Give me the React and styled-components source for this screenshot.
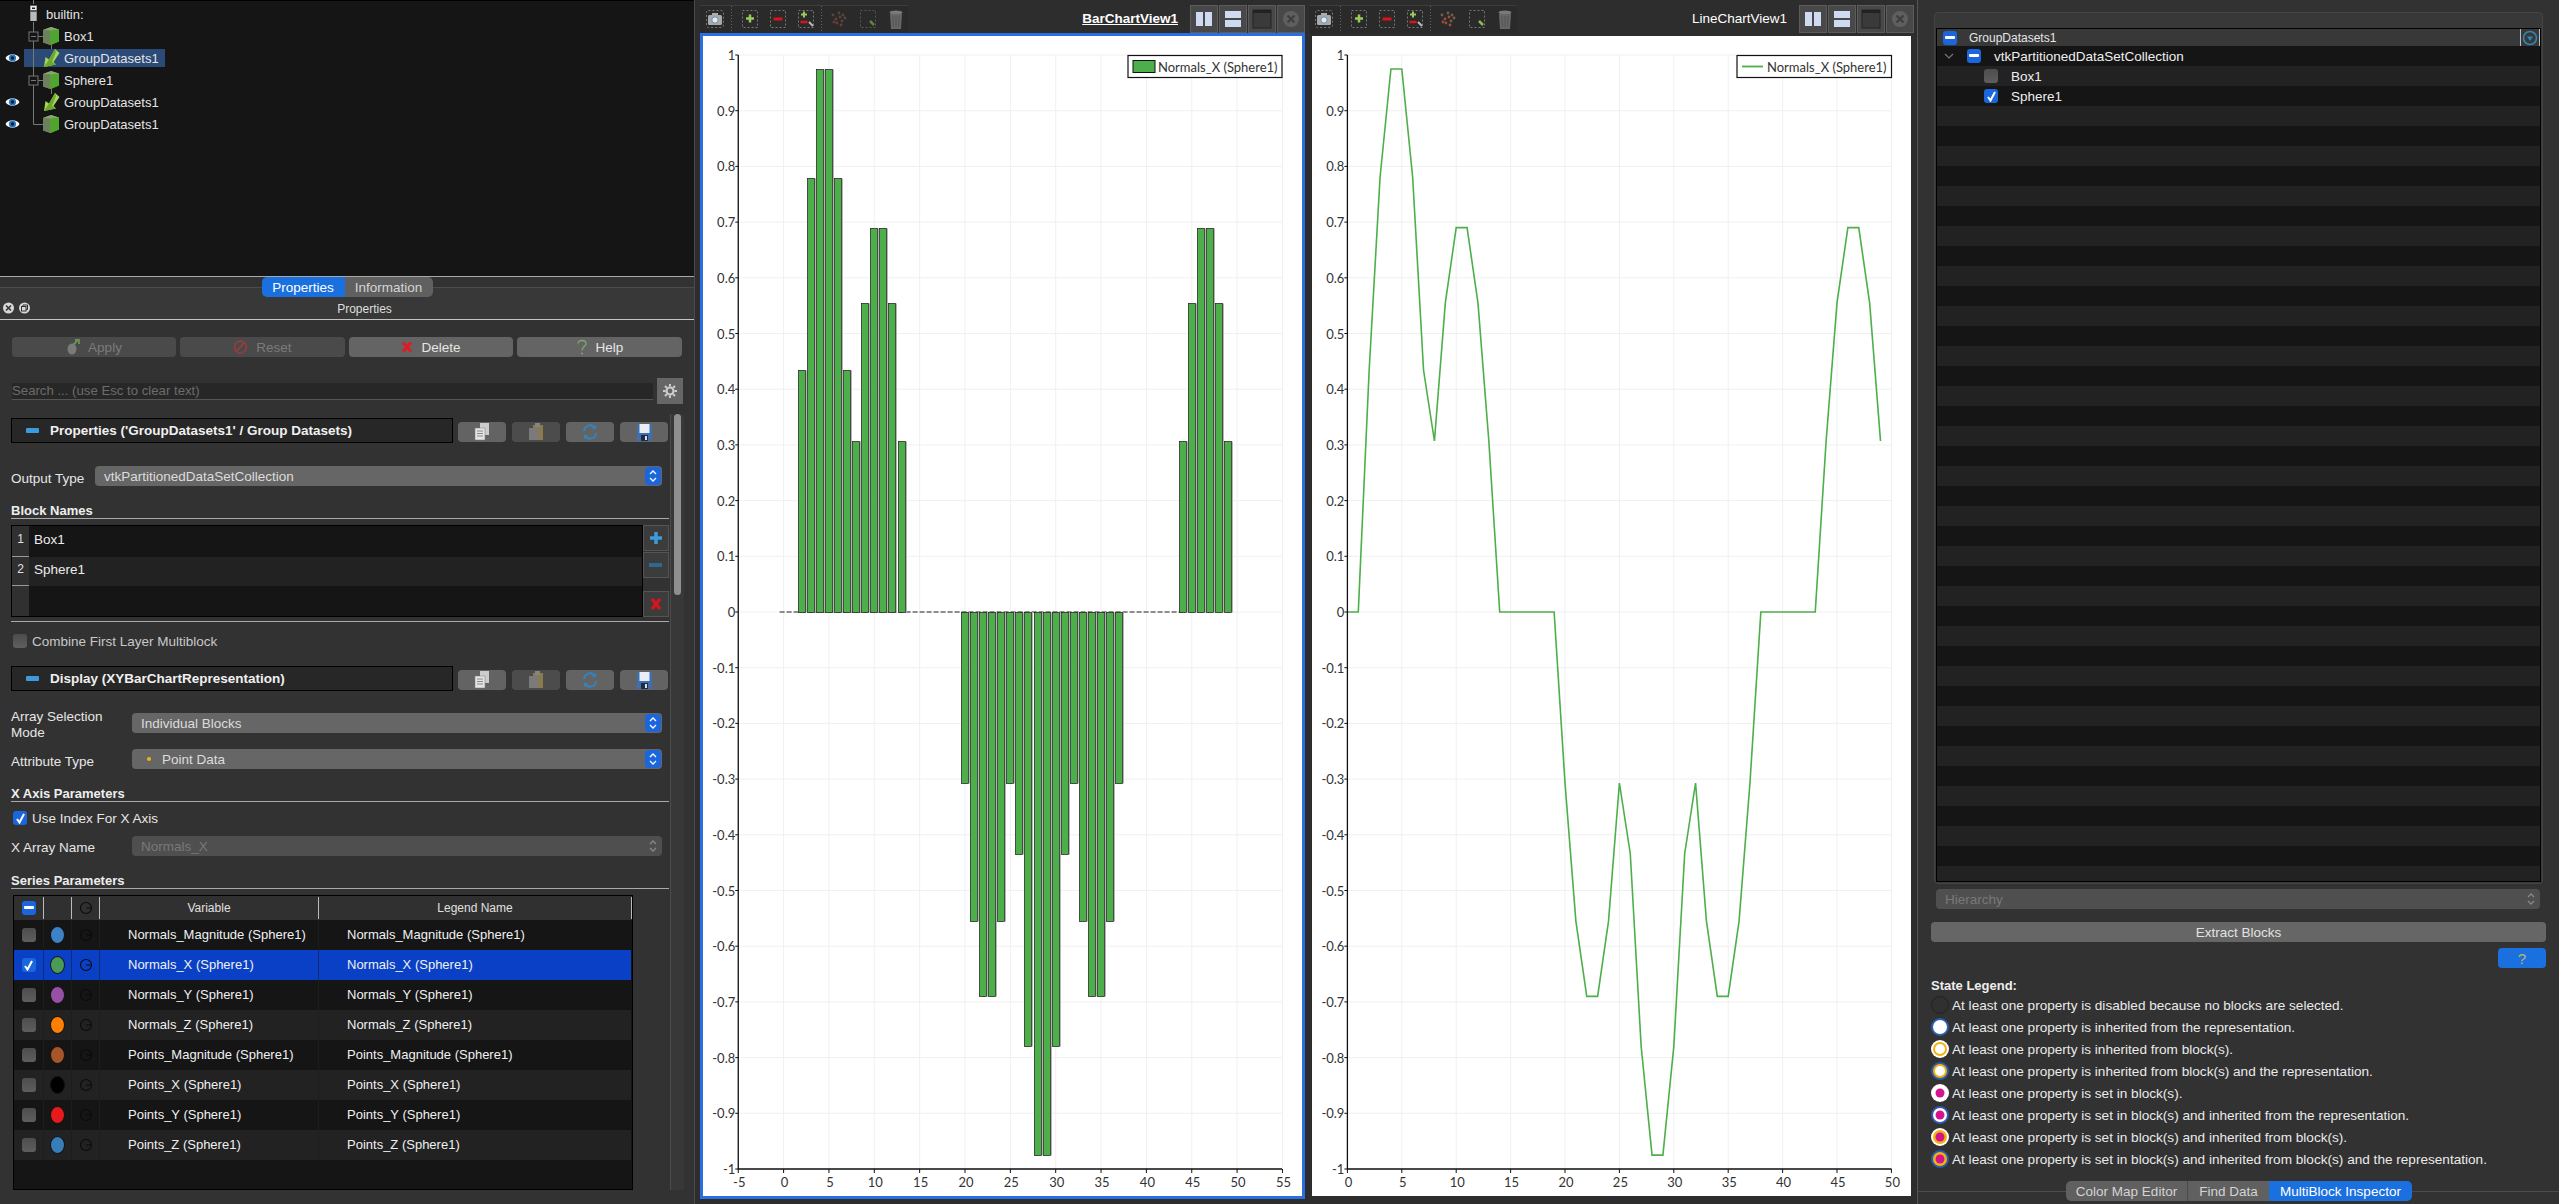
import React from 'react';
import styled, { createGlobalStyle } from 'styled-components';

const Global = createGlobalStyle`
  html, body { margin: 0; padding: 0; background: #2d2d2d; }
  body { font-family: "Liberation Sans", Arial, sans-serif; font-size: 13px; color: #e8e8e8; overflow: hidden; }
  * { box-sizing: border-box; }
`;

const Page = styled.div`width: 2559px; height: 1204px; display: flex; background: #2d2d2d; overflow: hidden;`;
const LeftColumn = styled.div`width: 695px; height: 1204px; flex: none; display: flex; flex-direction: column; margin-right: 5px; border-right: 1px solid #4a4a4a; background: #323232;`;

/* pipeline tree */
const PipelineTree = styled.div`height: 277px; flex: none; background: #151515; padding-top: 2px; border-top: 1px solid #000; border-bottom: 1px solid #a8a8a8;`;
const TreeRow = styled.div`height: 22px; display: flex; align-items: center;`;
const EyeCell = styled.div`width: 24px; flex: none; display: flex; justify-content: center; padding-left: 1px;`;
const TreeBody = styled.div`height: 18px; width: 141px; display: flex; align-items: center; background: ${p => (p.$selected ? '#2c4a78' : 'transparent')};`;
const TreeLabel = styled.span`font-size: 13px; color: #e4e4e4; white-space: nowrap;`;
const TreeSvg = styled.svg`flex: none; overflow: visible; display: block;`;

/* dock tabs */
const DockTabs = styled.div`height: 20px; flex: none; display: flex; justify-content: center; position: relative; background: linear-gradient(#323232 50%, #383838 50%);`;
const DockTabLine = styled.div`position: absolute; left: 0; right: 0; top: 10px; height: 1px; background: #4c4c4c;`;
const TabGroup = styled.div`display: flex; position: relative; border-radius: 5px; overflow: hidden; height: 20px;`;
const Tab = styled.div`height: 20px; width: ${p => p.$w}px; display: flex; align-items: center; justify-content: center; font-size: 13.5px; white-space: nowrap; color: ${p => (p.$active ? '#fff' : '#d4d4d4')}; background: ${p => (p.$active ? '#1b70e0' : '#606060')}; border-left: ${p => (p.$sep ? '1px solid #4a4a4a' : '0')};`;
const TitleBar = styled.div`height: 23px; flex: none; display: flex; align-items: center; padding-left: 3px; gap: 4px; background: #383838; border-bottom: 1px solid #c4c4c4; position: relative;`;
const TitleText = styled.div`position: absolute; left: 0; right: 0; text-align: center; font-size: 12px; color: #dedede; padding-left: 35px; padding-top: 1px;`;

const ActionRow = styled.div`margin: 17px 12px 0; width: 671px; display: grid; grid-template-columns: 164px 165px 164px 165px; column-gap: 4px;`;
const ActionButton = styled.div`height: 20px; border-radius: 4px; display: flex; align-items: center; justify-content: center; gap: 8px; font-size: 13.5px; background: ${p => (p.$disabled ? '#4a4a4a' : '#646464')}; color: ${p => (p.$disabled ? '#7b7b7b' : '#e6e6e6')};`;
const SearchRow = styled.div`margin: 21px 11px 0 12px; display: flex; align-items: center; gap: 4px; height: 26px;`;
const SearchInput = styled.div`width: 642px; height: 17px; background: #272727; border-bottom: 1px solid #555; color: #6c6c6c; font-size: 13.2px; line-height: 16px; white-space: nowrap;`;
const GearButton = styled.div`width: 26px; height: 26px; background: #666; display: flex; align-items: center; justify-content: center;`;

const ScrollArea = styled.div`margin-top: 10px; height: 776px; display: flex; flex: none;`;
const ScrollContent = styled.div`width: 670px; padding-left: 11px; flex: none; display: flex; flex-direction: column;`;
const ScrollTrack = styled.div`width: 14px; height: 776px; background: #383838; border-left: 1px solid #4c4c4c; padding: 0 3px;`;
const ScrollThumb = styled.div`width: 7px; height: 181px; background: #8f8f8f; border-radius: 4px;`;

const SectionHeader = styled.div`margin-top: ${p => p.$top}px; height: 25px; flex: none; display: flex; align-items: flex-end; gap: 6px; width: 658px;`;
const SectionBox = styled.div`width: 442px; height: 25px; background: #272727; border: 1px solid #000; display: flex; align-items: center; padding-left: 14px; font-weight: 700; font-size: 13.5px; color: #f0f0f0; gap: 11px; margin-right: -1px;`;
const MinusBar = styled.span`width: 13px; height: 5px; background: #3b9bdc; display: block; flex: none; border-radius: 1px;`;
const MiniButton = styled.div`width: 48px; height: 20px; margin-bottom: 1px; border-radius: 4px; background: ${p => (p.$dim ? '#4c4c4c' : '#636363')}; display: flex; align-items: center; justify-content: center;`;

const FormRow = styled.div`margin-top: ${p => p.$top || 0}px; height: ${p => p.$h || 20}px; flex: none; display: flex; align-items: flex-start;`;
const FieldLabel = styled.div`width: ${p => p.$w}px; flex: none; font-size: 13.5px; line-height: 16px; color: #e6e6e6; margin-top: ${p => p.$mt ?? 5}px;`;
const Combo = styled.div`width: ${p => p.$w}px; height: 20px; border-radius: 4px; background: ${p => (p.$disabled ? '#4f4f4f' : '#666')}; color: ${p => (p.$disabled ? '#787878' : '#dcdcdc')}; display: flex; align-items: center; justify-content: space-between; padding: 0 1px 0 9px; font-size: 13.5px;`;
const ComboText = styled.span`display: flex; align-items: center; gap: 11px; padding-left: ${p => p.$indent || 0}px;`;
const ComboArrow = styled.span`width: 16px; height: 18px; border-radius: 4px; display: flex; align-items: center; justify-content: center; background: ${p => (p.$disabled ? 'transparent' : '#1b66dd')}; flex: none;`;
const GroupTitle = styled.div`margin-top: ${p => p.$top}px; width: 658px; height: 15px; flex: none; border-bottom: 1px solid #a9a9a9; font-weight: 700; font-size: 13px; line-height: 13px; color: #eee;`;

const BlockWrap = styled.div`margin-top: 6px; height: 92px; display: flex; flex: none; width: 658px;`;
const BlockTable = styled.div`width: 632px; height: 92px; background: #151515; border: 1px solid #000; display: flex; flex-direction: column; position: relative;`;
const BlockRow = styled.div`height: ${p => p.$h}px; flex: none; display: flex; background: ${p => (p.$alt ? '#222' : 'transparent')};`;
const BlockIndex = styled.div`width: 17px; flex: none; background: #303030; border-bottom: ${p => (p.$line ? '1px solid #999' : '0')}; font-size: 12px; display: flex; align-items: center; justify-content: center; padding-bottom: 4px; color: #e0e0e0;`;
const BlockFill = styled.div`width: 17px; position: absolute; left: 0; top: 60px; bottom: 0; background: #303030;`;
const BlockName = styled.div`display: flex; align-items: center; padding-left: 5px; padding-bottom: 4px; font-size: 13.5px; color: #ececec;`;
const BlockTools = styled.div`width: 26px; flex: none; display: flex; flex-direction: column; gap: 1px;`;
const ToolButton = styled.div`width: 26px; height: 26px; flex: none; background: #3c3c3c; border: 1px solid #555; display: flex; align-items: center; justify-content: center; margin-top: ${p => p.$top || 0}px;`;
const Divider = styled.div`margin-top: 4px; height: 1px; width: 658px; flex: none; background: #a9a9a9;`;

const CheckRow = styled.div`margin-top: ${p => p.$top}px; height: 14px; flex: none; display: flex; align-items: center; gap: 5px; margin-left: 2px; font-size: 13.5px; color: ${p => (p.$dim ? '#c8c8c8' : '#e6e6e6')};`;
const Check = styled.span`width: 14px; height: 14px; border-radius: 3px; flex: none; display: flex; align-items: center; justify-content: center; margin-left: ${p => p.$ml || 0}px; background: ${p => (p.$state === 'off' ? 'linear-gradient(#4d4d4d,#5e5e5e)' : '#1b66dd')};`;

const SeriesTable = styled.div`margin: 6px 0 0 2px; width: 620px; height: 295px; background: #151515; border: 1px solid #000; display: flex; flex-direction: column; flex: none;`;
const SeriesHead = styled.div`height: 24px; flex: none; display: grid; grid-template-columns: 30px 28px 28px 219px 1fr; background: #303030; font-size: 12px; color: #e0e0e0; width: 618px;`;
const HeadCell = styled.div`display: flex; align-items: center; justify-content: center; border-right: 1px solid #bbb; height: 22px; margin-top: 1px;`;
const SeriesRow = styled.div`height: 30px; flex: none; width: 617px; display: grid; grid-template-columns: 30px 28px 28px 219px 1fr; background: ${p => (p.$selected ? '#0a40c6' : p.$alt ? '#222' : '#151515')}; color: #f0f0f0; font-size: 13px;`;
const Cell = styled.div`display: flex; align-items: center; justify-content: ${p => (p.$text ? 'flex-start' : 'center')}; padding-left: ${p => (p.$text ? 28 : 0)}px; padding-bottom: ${p => (p.$text ? 2 : 0)}px; border-right: 1px solid ${p => (p.$last ? 'transparent' : p.$selected ? '#0e2b73' : '#1d1d1d')};`;
const Swatch = styled.span`width: 15px; height: 18px; border-radius: 50%; background: ${p => p.$c}; display: block; border: 1px solid #111;`;

/* views */
const ViewPane = styled.div`width: 605px; height: 1199px; flex: none; display: flex; flex-direction: column; padding-top: 4px; margin-right: ${p => p.$mr}px;`;
const ViewBar = styled.div`height: 29px; flex: none; display: flex; align-items: center; justify-content: space-between;`;
const ToolStrip = styled.div`width: 208px; height: 28px; background: #2a2a2a; border-top: 1px solid #3c3c3c; display: flex; align-items: center; flex: none;`;
const StripIcon = styled.svg`display: block; flex: none; margin-left: ${p => p.$ml || 0}px;`;
const ViewRight = styled.div`display: flex; align-items: center; gap: 1px;`;
const ViewTitle = styled.div`font-size: 13.5px; color: #fff; margin-right: 11px; font-weight: ${p => (p.$active ? 700 : 400)}; text-decoration: ${p => (p.$active ? 'underline' : 'none')};`;
const ViewButton = styled.div`width: 28px; height: 28px; background: #484848; border: 1px solid #5c5c5c; display: flex; align-items: center; justify-content: center;`;
const ChartFrame = styled.div`flex: none; width: 605px; height: 1166px; border: 3px solid ${p => (p.$active ? '#2a6fe0' : '#2d2d2d')}; background: #fff;`;
const ChartSvg = styled.svg`display: block; font-family: Lato, "Open Sans", sans-serif; font-size: 13px;`;

/* right panel */
const RightPanel = styled.div`margin-left: 3px; width: 642px; height: 1204px; flex: none; border-left: 1px solid #555; background: #323232; padding: 12px 13px 0 14px; display: flex; flex-direction: column;`;
const GroupFrame = styled.div`margin: 0 3px 0 2px; height: 872px; flex: none; border: 1px solid #444; border-radius: 4px; background: #383838; padding: 15px 1px 0 1px;`;
const InspectorTable = styled.div`height: 854px; border: 1px solid #000; background: #151515; overflow: hidden; display: flex; flex-direction: column;`;
const InspectorHead = styled.div`height: 17px; flex: none; display: flex; align-items: center; gap: 12px; background: #383838; font-size: 12px; color: #e6e6e6; padding-left: 6px; position: relative;`;
const InspectorRow = styled.div`height: 20px; flex: none; display: flex; align-items: center; background: ${p => (p.$alt ? '#222' : '#151515')}; padding-left: ${p => p.$indent || 0}px; gap: 13px; font-size: 13.5px; color: #eee;`;
const Chevron = styled.svg`margin-left: 7px; margin-right: -6px; display: block;`;
const FilterMark = styled.div`position: absolute; right: 0; top: 0; height: 17px; width: 20px; border-left: 1px solid #bbb; border-right: 1px solid #bbb; display: flex; align-items: center; justify-content: center;`;
const WideCombo = styled(Combo)`margin: 5px 6px 0 4px; width: auto; flex: none; padding-left: 9px;`;
const ExtractButton = styled.div`margin: 13px 0 0 -1px; height: 20px; flex: none; border-radius: 4px; background: #666; display: flex; align-items: center; justify-content: center; font-size: 13.5px; color: #e2e2e2;`;
const HelpButton = styled.div`margin-top: 6px; align-self: flex-end; width: 48px; height: 20px; flex: none; border-radius: 4px; background: #1b70e0; color: #b9b56c; display: flex; align-items: center; justify-content: center; font-size: 15px;`;
const LegendTitle = styled.div`margin: 10px 0 0 -1px; height: 16px; line-height: 16px; font-weight: 700; font-size: 13px; color: #eee; flex: none;`;
const LegendRow = styled.div`margin-left: -1px; height: 22px; flex: none; display: flex; align-items: center; gap: 3px; font-size: 13.6px; color: #eaeaea; white-space: nowrap;`;
const DotSvg = styled.svg`flex: none; display: block;`;
const BottomTabs = styled.div`margin: 11px -13px 0 -14px; height: 20px; flex: none; display: flex; justify-content: flex-start; padding-left: 148px; position: relative;`;

/* ---------- icons ---------- */
const Eye = () => (
  <svg width="15" height="14" viewBox="0 0 15 14">
    <path d="M.5 7C3 2 12 2 14.5 7 12 12 3 12 .5 7Z" fill="#f4f8fb" />
    <circle cx="7.5" cy="7" r="3.6" fill="#2a79c0" />
    <circle cx="7.5" cy="7" r="1.7" fill="#0b1d33" />
  </svg>
);
const Cube = () => (
  <g>
    <path d="M0 3 8 0l8 2.500v12L8 18 0 15.500Z" fill="#6f8f4a" />
    <path d="M7 3.500l9-1v12L7 18Z" fill="#4fa52d" />
    <path d="M0 3l7 .5 9-1L8 0Z" fill="#86a870" />
    <path d="M0 3l7 .5V18L0 15.500Z" fill="#6e7f5e" />
  </g>
);
const Arrow = () => (
  <g>
    <path d="M0 18L1.500 8 5 10.500 11 0 15.500 4 9.500 13 12 15.500Z" fill="#a4d45c" />
    <path d="M0 18L5 10.500 11 0 12 3 8 13 12 15.500Z" fill="#6ba82c" />
  </g>
);
const TreeGlyph = ({ kind, line, box, elbow, stub }) => {
  if (kind === 'server') {
    return (
      <TreeSvg width="22" height="18" viewBox="0 0 22 18">
        <path d="M9.500 -8V-1M9.500 17v5" stroke="#7b7b7b" />
        <rect x="6" y="0" width="7" height="16" fill="#5b5b5b" />
        <rect x="6.500" y="1" width="6" height="4" fill="#f0f0f0" />
        <rect x="8" y="2.500" width="3" height="1.500" fill="#222" />
        <rect x="6.500" y="7" width="6" height="9" fill="#bbb" />
      </TreeSvg>
    );
  }
  return (
    <TreeSvg width="40" height="18" viewBox="0 0 40 18">
      {line && <path d="M9.500 -2V20" stroke="#777" />}
      {elbow && <path d="M9.500 -2V9.500H19" stroke="#777" fill="none" />}
      {box && (
        <g>
          <path d="M9.500 -2V20" stroke="#777" />
          <rect x="5" y="5" width="9" height="9" fill="#151515" stroke="#777" />
          <path d="M7 9.500h5M14 9.500h5" stroke="#777" />
        </g>
      )}
      {stub && <path d="M27.500 18v5" stroke="#777" />}
      <g transform="translate(19 0)">{kind === 'cube' ? <Cube /> : <g transform="translate(1 0)"><Arrow /></g>}</g>
    </TreeSvg>
  );
};
const Chev = ({ color = '#fff' }) => (
  <svg width="10" height="14" viewBox="0 0 10 14">
    <path d="M2 5l3-3 3 3M2 9l3 3 3-3" fill="none" stroke={color} strokeWidth="1.300" />
  </svg>
);
const TickMark = () => (
  <svg width="11" height="11" viewBox="0 0 11 11"><path d="M2 6l2.500 3.500L9 1" fill="none" stroke="#fff" strokeWidth="2" /></svg>
);
const DashMark = () => <svg width="10" height="4" viewBox="0 0 10 4"><rect width="10" height="3" rx="1" fill="#fff" /></svg>;
const CopyIcon = () => (
  <svg width="16" height="18" viewBox="0 0 16 18">
    <rect x="6" y="0" width="9" height="12" fill="#ccc" />
    <rect x="1" y="5" width="10" height="12" fill="#e4e4e4" stroke="#777" strokeWidth=".5" />
    <path d="M3 8h6M3 10.500h6M3 13h6" stroke="#888" />
  </svg>
);
const PasteIcon = () => (
  <svg width="16" height="18" viewBox="0 0 16 18" opacity=".75">
    <rect x="5" y="2" width="10" height="15" fill="#a08a50" />
    <rect x="1" y="5" width="9" height="12" fill="#8a8a8a" />
    <rect x="7" y="0" width="5" height="4" fill="#999" />
  </svg>
);
const RefreshIcon = () => (
  <svg width="16" height="18" viewBox="0 0 16 18">
    <path d="M2 8A6 6 0 0 1 13 5M14 10A6 6 0 0 1 3 13" fill="none" stroke="#2f86c6" strokeWidth="1.800" />
    <path d="M14 2v4h-4M2 16v-4h4" fill="#2f86c6" />
  </svg>
);
const SaveIcon = () => (
  <svg width="15" height="17" viewBox="0 0 15 17">
    <rect width="15" height="17" rx="1" fill="#3f6fb0" />
    <rect x="2.500" y="0" width="10" height="9" fill="#e8eef6" />
    <rect x="4" y="11" width="7" height="6" fill="#1e2c44" />
    <rect x="8" y="12" width="2" height="4" fill="#ddd" />
  </svg>
);
const PanelTools = () => (
  <>
    <MiniButton><CopyIcon /></MiniButton>
    <MiniButton $dim><PasteIcon /></MiniButton>
    <MiniButton><RefreshIcon /></MiniButton>
    <MiniButton><SaveIcon /></MiniButton>
  </>
);
const SwirlIcon = ({ color = '#0b0b0b' }) => (
  <svg width="14" height="14" viewBox="0 0 14 14"><circle cx="7" cy="7" r="5.500" fill="none" stroke={color} strokeWidth="1.100" /><path d="M7 7h5" stroke={color} /></svg>
);

const dashed = { fill: 'none', stroke: '#777', strokeDasharray: '2 2' };
const CameraIcon = () => (
  <StripIcon $ml={6} width="18" height="18" viewBox="0 0 18 18">
    <rect x=".5" y=".5" width="17" height="17" rx="2" {...dashed} />
    <rect x="2" y="5" width="14" height="10" rx="1.500" fill="#aaa" />
    <rect x="6" y="3" width="6" height="3" fill="#aaa" />
    <circle cx="9" cy="10" r="3.200" fill="#dfe9f2" stroke="#6c8aa5" />
  </StripIcon>
);
const Sep = () => (
  <StripIcon $ml={7} width="1" height="26" viewBox="0 0 1 26"><path d="M.5 0V26" stroke="#666" strokeDasharray="1 2" /></StripIcon>
);
const ZoomIcon = ({ kind, ml }) => (
  <StripIcon $ml={ml} width="16" height="18" viewBox="0 0 16 18">
    <rect x=".5" y=".5" width="15" height="17" {...dashed} />
    {kind === 'plus' && <path d="M8 4.500v8M4 8.500h8" stroke="#9acb5a" strokeWidth="2.500" />}
    {kind === 'minus' && <path d="M3.500 9h9" stroke="#d9141d" strokeWidth="3" />}
    {kind === 'mix' && <g><path d="M6 1.500v6M3 4.500h6" stroke="#9acb5a" strokeWidth="2" /><path d="M2.500 12h7" stroke="#d9141d" strokeWidth="2.500" /><path d="M11 12l4 4" stroke="#bbb" strokeWidth="2" /></g>}
  </StripIcon>
);
const PickIcon = ({ ml, on }) => (
  <StripIcon $ml={ml} width="18" height="18" viewBox="0 0 18 18" opacity={on ? 0.8 : 0.45}>
    {[[3, 5], [6, 9], [9, 3], [10, 7], [13, 5], [7, 13], [12, 11], [4, 12], [15, 8], [11, 15]].map(([x, y], i) => <circle key={i} cx={x} cy={y} r="1.400" fill={i % 2 ? '#c0583a' : '#8a6a55'} />)}
  </StripIcon>
);
const PickZoneIcon = ({ ml, on }) => (
  <StripIcon $ml={ml} width="16" height="18" viewBox="0 0 16 18" opacity={on ? 1 : 0.6}>
    <rect x=".5" y=".5" width="15" height="17" {...dashed} />
    <path d="M10 11l4 4" stroke="#8bbb4a" strokeWidth="2.500" />
  </StripIcon>
);
const TrashIcon = ({ ml }) => (
  <StripIcon $ml={ml} width="14" height="19" viewBox="0 0 14 19">
    <ellipse cx="7" cy="2.500" rx="6.500" ry="2" fill="#7a7a7a" />
    <path d="M1 4h12l-1 15H2Z" fill="#666" />
    <path d="M4 6l.5 11M7 6v11M10 6l-.5 11" stroke="#555" />
  </StripIcon>
);
const SplitIcon = ({ dir }) => (
  <svg width="18" height="18" viewBox="0 0 18 18">
    {dir === 'h'
      ? <g fill="#cfd9f2"><rect x="1" y="2" width="7" height="14" /><rect x="10" y="2" width="7" height="14" /></g>
      : <g fill="#cfd9f2"><rect x="1" y="1" width="16" height="7" /><rect x="1" y="10" width="16" height="7" /></g>}
  </svg>
);
const MaxIcon = () => <svg width="20" height="20" viewBox="0 0 20 20"><rect x="1" y="1" width="18" height="18" fill="#3a3a3a" stroke="#222" strokeWidth="1" /><rect x="1" y="1" width="18" height="3" fill="#222" /></svg>;
const CloseIcon = () => <svg width="18" height="18" viewBox="0 0 18 18"><circle cx="9" cy="9" r="8" fill="#5f5f5f" /><path d="M5.500 5.500l7 7M12.500 5.500l-7 7" stroke="#3e3e3e" strokeWidth="2.200" /></svg>;

const ViewToolbar = ({ active }) => (
  <ToolStrip>
    <CameraIcon />
    <Sep />
    <ZoomIcon kind="plus" ml={10} />
    <ZoomIcon kind="minus" ml={12} />
    <ZoomIcon kind="mix" ml={12} />
    <Sep />
    <PickIcon ml={8} on={!active} />
    <PickZoneIcon ml={12} on={!active} />
    <TrashIcon ml={13} />
  </ToolStrip>
);

/* ---------- chart ---------- */
const VALUES = [0, 0, .434, .78, .975, .975, .78, .434, .307, .555, .69, .69, .555, .307, 0, 0, 0, 0, 0, 0,
  -.307, -.555, -.69, -.69, -.555, -.307, -.434, -.78, -.975, -.975, -.78, -.434, -.307, -.555, -.69, -.69, -.555, -.307,
  0, 0, 0, 0, 0, 0, .307, .555, .69, .69, .555, .307];
const YTICKS = Array.from({ length: 21 }, (_, i) => Math.round((1 - i * 0.1) * 10) / 10);
const GREEN = '#4daf4a';

const Bar = ({ cx, top, bottom }) => {
  const x = Math.round(cx - 4) + 0.5;
  const y = Math.round(Math.min(top, bottom)) + 0.5;
  const h = Math.round(Math.abs(top - bottom));
  return (
    <g>
      <rect x={x + 7.5} y={y} width="1" height={h} fill="#b5b5b5" />
      <rect x={x} y={y} width="7" height={h} fill={GREEN} stroke="#222" strokeWidth=".75" />
    </g>
  );
};

const Chart = ({ type, ox, x0, unit, xTicks, right, legendX }) => {
  const X = v => x0 - ox + unit * v;
  const Y = v => 612 - 36 - 557 * v;
  const left = X(xTicks[0]);
  const rightX = right - ox;
  const lx = legendX - ox;
  const lw = right - legendX;
  return (
    <ChartSvg width="599" height="1160" viewBox="0 0 599 1160">
      {xTicks.map(t => <path key={t} d={`M${X(t)} ${Y(1)}V${Y(-1)}`} stroke="#f0f0f0" />)}
      {YTICKS.map(t => <path key={t} d={`M${left} ${Y(t)}H${rightX}`} stroke="#f0f0f0" />)}
      {type === 'bar' && <path d={`M${X(0) - 4} ${Y(0)}H${X(44)}`} stroke="#222" strokeDasharray="5 2" />}
      {type === 'bar' && VALUES.map((v, i) => (v === 0 ? null : <Bar key={i} cx={X(i)} top={Y(v)} bottom={Y(0)} />))}
      {type === 'line' && (
        <polyline points={VALUES.map((v, i) => `${X(i)},${Y(v)}`).join(' ')} fill="none" stroke={GREEN} strokeWidth="1.600" />
      )}
      <path d={`M${left} ${Y(1)}V${Y(-1)}H${rightX}`} fill="none" stroke="#111" strokeWidth="1.300" />
      {YTICKS.map(t => (
        <g key={t}>
          <path d={`M${left - 3} ${Y(t)}H${left}`} stroke="#111" />
          <text x={left - 3} y={Y(t)} textAnchor="end" dominantBaseline="central" fill="#333">{t === 0 ? '0' : t}</text>
        </g>
      ))}
      {xTicks.map(t => (
        <g key={t}>
          <path d={`M${X(t)} ${Y(-1)}v4`} stroke="#111" />
          <text x={X(t) + 1} y={Y(-1) + 13} textAnchor="middle" dominantBaseline="central" fill="#333">{t}</text>
        </g>
      ))}
      <rect x={lx} y="19.500" width={lw} height="22" fill="#fff" stroke="#111" strokeWidth="1.200" />
      {type === 'bar'
        ? <rect x={lx + 5} y="24.500" width="22" height="12" fill={GREEN} stroke="#111" />
        : <path d={`M${lx + 5} 30.500h21`} stroke={GREEN} strokeWidth="1.800" />}
      <text x={lx + 30} y="30.500" dominantBaseline="central" fill="#333">Normals_X (Sphere1)</text>
    </ChartSvg>
  );
};

const BAR_TICKS = Array.from({ length: 13 }, (_, i) => -5 + i * 5);
const LINE_TICKS = Array.from({ length: 11 }, (_, i) => i * 5);

const View = ({ title, active, mr, chart }) => (
  <ViewPane $mr={mr}>
    <ViewBar>
      <ViewToolbar active={active} />
      <ViewRight>
        <ViewTitle $active={active}>{title}</ViewTitle>
        <ViewButton><SplitIcon dir="h" /></ViewButton>
        <ViewButton><SplitIcon dir="v" /></ViewButton>
        <ViewButton><MaxIcon /></ViewButton>
        <ViewButton><CloseIcon /></ViewButton>
      </ViewRight>
    </ViewBar>
    <ChartFrame $active={active}>{chart}</ChartFrame>
  </ViewPane>
);

/* ---------- data ---------- */
const SERIES = [
  ['Normals_Magnitude (Sphere1)', '#3c82c4'],
  ['Normals_X (Sphere1)', '#4a9a58', true],
  ['Normals_Y (Sphere1)', '#9750a6'],
  ['Normals_Z (Sphere1)', '#ff7f00'],
  ['Points_Magnitude (Sphere1)', '#a65628'],
  ['Points_X (Sphere1)', '#000000'],
  ['Points_Y (Sphere1)', '#e41a1c'],
  ['Points_Z (Sphere1)', '#377eb8'],
];
const BLUE = '#2a5cae', GOLD = '#f2b311', PINK = '#d6128c', WHITE = '#ffffff';
const STATES = [
  [null, null, null, 'At least one property is disabled because no blocks are selected.'],
  [BLUE, WHITE, WHITE, 'At least one property is inherited from the representation.'],
  [WHITE, GOLD, WHITE, 'At least one property is inherited from block(s).'],
  [BLUE, GOLD, WHITE, 'At least one property is inherited from block(s) and the representation.'],
  [WHITE, WHITE, PINK, 'At least one property is set in block(s).'],
  [BLUE, WHITE, PINK, 'At least one property is set in block(s) and inherited from the representation.'],
  [WHITE, GOLD, PINK, 'At least one property is set in block(s) and inherited from block(s).'],
  [BLUE, GOLD, PINK, 'At least one property is set in block(s) and inherited from block(s) and the representation.'],
];
const StateDot = ({ outer, ring, core }) => (
  <DotSvg width="18" height="18" viewBox="0 0 18 18">
    {outer ? (
      <g>
        <circle cx="9" cy="9" r="9" fill={outer} />
        <circle cx="9" cy="9" r="7" fill={ring} />
        <circle cx="9" cy="9" r={core === PINK ? 4.5 : 5} fill={core} />
      </g>
    ) : <circle cx="9" cy="9" r="8.500" fill="#303030" stroke="#222" />}
  </DotSvg>
);

export default function App() {
  return (
    <Page>
      <Global />
      <LeftColumn>
        <PipelineTree>
          <TreeRow><EyeCell /><TreeBody><TreeGlyph kind="server" /><TreeLabel>builtin:</TreeLabel></TreeBody></TreeRow>
          <TreeRow><EyeCell /><TreeBody><TreeGlyph kind="cube" box stub /><TreeLabel>Box1</TreeLabel></TreeBody></TreeRow>
          <TreeRow><EyeCell><Eye /></EyeCell><TreeBody $selected><TreeGlyph kind="arrow" line /><TreeLabel>GroupDatasets1</TreeLabel></TreeBody></TreeRow>
          <TreeRow><EyeCell /><TreeBody><TreeGlyph kind="cube" box stub /><TreeLabel>Sphere1</TreeLabel></TreeBody></TreeRow>
          <TreeRow><EyeCell><Eye /></EyeCell><TreeBody><TreeGlyph kind="arrow" line /><TreeLabel>GroupDatasets1</TreeLabel></TreeBody></TreeRow>
          <TreeRow><EyeCell><Eye /></EyeCell><TreeBody><TreeGlyph kind="cube" elbow /><TreeLabel>GroupDatasets1</TreeLabel></TreeBody></TreeRow>
        </PipelineTree>
        <DockTabs>
          <DockTabLine />
          <TabGroup>
            <Tab $active $w={83}>Properties</Tab>
            <Tab $w={88}>Information</Tab>
          </TabGroup>
        </DockTabs>
        <TitleBar>
          <svg width="11" height="12" viewBox="0 0 11 12"><circle cx="5.500" cy="6" r="5.500" fill="#d8d8d8" /><path d="M3 3.500l5 5M8 3.500l-5 5" stroke="#333" strokeWidth="1.600" /></svg>
          <svg width="13" height="12" viewBox="0 0 13 12"><circle cx="6.500" cy="6" r="5.500" fill="#d8d8d8" /><rect x="3.500" y="4.500" width="4.500" height="4.500" fill="none" stroke="#333" /><path d="M5 4.500V3h4.500v4.500H8" fill="none" stroke="#333" /></svg>
          <TitleText>Properties</TitleText>
        </TitleBar>
        <ActionRow>
          <ActionButton $disabled>
            <svg width="14" height="16" viewBox="0 0 14 16"><ellipse cx="6" cy="10" rx="4.500" ry="5.500" fill="#7a7a7a" /><path d="M7 6l5-5M9 1h4v4" stroke="#6c8f58" strokeWidth="1.800" fill="none" /></svg>
            Apply
          </ActionButton>
          <ActionButton $disabled>
            <svg width="15" height="16" viewBox="0 0 15 16"><circle cx="7.500" cy="8" r="6" fill="none" stroke="#9c3c3c" strokeWidth="1.600" /><path d="M3.500 12.500l8-9" stroke="#9c3c3c" strokeWidth="1.600" /></svg>
            Reset
          </ActionButton>
          <ActionButton>
            <svg width="12" height="12" viewBox="0 0 12 12"><path d="M2 1.500l8 9M10 1.500l-8 9" stroke="#e01b24" strokeWidth="3.200" /></svg>
            Delete
          </ActionButton>
          <ActionButton>
            <svg width="12" height="16" viewBox="0 0 12 16"><path d="M2 4.500C2 .5 10 .5 10 4.500 10 7.500 6 7.500 6 11.500" fill="none" stroke="#7fa86a" strokeWidth="1.300" /><circle cx="6" cy="14.500" r="1" fill="#7fa86a" /></svg>
            Help
          </ActionButton>
        </ActionRow>
        <SearchRow>
          <SearchInput>Search ... (use Esc to clear text)</SearchInput>
          <GearButton>
            <svg width="14" height="14" viewBox="0 0 14 14"><circle cx="7" cy="7" r="3.500" fill="none" stroke="#ccc" strokeWidth="2.200" /><path d="M7 0v2.500M7 11.500V14M0 7h2.500M11.500 7H14M2 2l1.800 1.800M10.200 10.200L12 12M12 2l-1.800 1.800M3.800 10.200L2 12" stroke="#ccc" strokeWidth="2" /></svg>
          </GearButton>
        </SearchRow>
        <ScrollArea>
          <ScrollContent>
            <SectionHeader $top={4}>
              <SectionBox><MinusBar />Properties ('GroupDatasets1' / Group Datasets)</SectionBox>
              <PanelTools />
            </SectionHeader>
            <FormRow $top={23}>
              <FieldLabel $w={84}>Output Type</FieldLabel>
              <Combo $w={567}>
                <ComboText>vtkPartitionedDataSetCollection</ComboText>
                <ComboArrow><Chev /></ComboArrow>
              </Combo>
            </FormRow>
            <GroupTitle $top={18}>Block Names</GroupTitle>
            <BlockWrap>
              <BlockTable>
                <BlockRow $h={31}><BlockIndex $line>1</BlockIndex><BlockName>Box1</BlockName></BlockRow>
                <BlockRow $h={29} $alt><BlockIndex $line>2</BlockIndex><BlockName>Sphere1</BlockName></BlockRow>
                <BlockFill />
              </BlockTable>
              <BlockTools>
                <ToolButton><svg width="14" height="14" viewBox="0 0 14 14"><path d="M7 1v12M1 7h12" stroke="#3b9bdc" strokeWidth="3.500" /></svg></ToolButton>
                <ToolButton><svg width="14" height="6" viewBox="0 0 14 6"><rect width="13" height="4" y="1" fill="#2c6a94" /></svg></ToolButton>
                <ToolButton $top={12}><svg width="12" height="14" viewBox="0 0 12 14"><path d="M2 2l8 10M10 2l-8 10" stroke="#d9141d" strokeWidth="3.200" /></svg></ToolButton>
              </BlockTools>
            </BlockWrap>
            <Divider />
            <CheckRow $top={12} $dim><Check $state="off" />Combine First Layer Multiblock</CheckRow>
            <SectionHeader $top={18}>
              <SectionBox><MinusBar />Display (XYBarChartRepresentation)</SectionBox>
              <PanelTools />
            </SectionHeader>
            <FormRow $top={22} $h={36}>
              <FieldLabel $w={121} $mt={-4}>Array Selection<br />Mode</FieldLabel>
              <Combo $w={530}><ComboText>Individual Blocks</ComboText><ComboArrow><Chev /></ComboArrow></Combo>
            </FormRow>
            <FormRow>
              <FieldLabel $w={121}>Attribute Type</FieldLabel>
              <Combo $w={530}>
                <ComboText $indent={6}>
                  <svg width="4" height="4" viewBox="0 0 4 4"><circle cx="2" cy="2" r="2" fill="#f2b311" /></svg>
                  Point Data
                </ComboText>
                <ComboArrow><Chev /></ComboArrow>
              </Combo>
            </FormRow>
            <GroupTitle $top={18}>X Axis Parameters</GroupTitle>
            <CheckRow $top={9}><Check $state="on"><TickMark /></Check>Use Index For X Axis</CheckRow>
            <FormRow $top={11}>
              <FieldLabel $w={121} $mt={4}>X Array Name</FieldLabel>
              <Combo $w={530} $disabled><ComboText>Normals_X</ComboText><ComboArrow $disabled><Chev color="#888" /></ComboArrow></Combo>
            </FormRow>
            <GroupTitle $top={18}>Series Parameters</GroupTitle>
            <SeriesTable>
              <SeriesHead>
                <HeadCell><Check $state="on"><DashMark /></Check></HeadCell>
                <HeadCell />
                <HeadCell><SwirlIcon /></HeadCell>
                <HeadCell>Variable</HeadCell>
                <HeadCell>Legend Name</HeadCell>
              </SeriesHead>
              {SERIES.map(([name, color, sel], i) => (
                <SeriesRow key={name} $selected={sel} $alt={i % 2 === 1}>
                  <Cell $selected={sel}><Check $state={sel ? 'on' : 'off'}>{sel && <TickMark />}</Check></Cell>
                  <Cell $selected={sel}><Swatch $c={color} /></Cell>
                  <Cell $selected={sel}><SwirlIcon /></Cell>
                  <Cell $text $selected={sel}>{name}</Cell>
                  <Cell $text $last>{name}</Cell>
                </SeriesRow>
              ))}
            </SeriesTable>
          </ScrollContent>
          <ScrollTrack><ScrollThumb /></ScrollTrack>
        </ScrollArea>
      </LeftColumn>

      <View title="BarChartView1" active mr={4}
        chart={<Chart type="bar" ox={703} x0={783.6} unit={9.07} xTicks={BAR_TICKS} right={1282} legendX={1128} />} />
      <View title="LineChartView1" mr={0}
        chart={<Chart type="line" ox={1312} x0={1347.4} unit={10.88} xTicks={LINE_TICKS} right={1891.5} legendX={1737} />} />

      <RightPanel>
        <GroupFrame>
          <InspectorTable>
            <InspectorHead>
              <Check $state="on"><DashMark /></Check>
              <span>GroupDatasets1</span>
              <FilterMark>
                <svg width="16" height="16" viewBox="0 0 16 16"><circle cx="8" cy="8" r="6.500" fill="none" stroke="#2f86b6" strokeWidth="1.600" /><path d="M5 6.500h6L8 11Z" fill="#2f86b6" /></svg>
              </FilterMark>
            </InspectorHead>
            <InspectorRow>
              <Chevron width="10" height="8" viewBox="0 0 10 8"><path d="M1 2l4 4 4-4" fill="none" stroke="#777" strokeWidth="1.200" /></Chevron>
              <Check $state="on" $ml={6}><DashMark /></Check>
              vtkPartitionedDataSetCollection
            </InspectorRow>
            <InspectorRow $alt $indent={47}><Check $state="off" />Box1</InspectorRow>
            <InspectorRow $indent={47}><Check $state="on"><TickMark /></Check>Sphere1</InspectorRow>
            {Array.from({ length: 39 }, (_, i) => <InspectorRow key={i} $alt={i % 2 === 0} />)}
          </InspectorTable>
        </GroupFrame>
        <WideCombo $disabled><ComboText>Hierarchy</ComboText><ComboArrow $disabled><Chev color="#888" /></ComboArrow></WideCombo>
        <ExtractButton>Extract Blocks</ExtractButton>
        <HelpButton>?</HelpButton>
        <LegendTitle>State Legend:</LegendTitle>
        {STATES.map(([o, r, c, text]) => (
          <LegendRow key={text}><StateDot outer={o} ring={r} core={c} />{text}</LegendRow>
        ))}
        <BottomTabs>
          <DockTabLine />
          <TabGroup>
            <Tab $w={121}>Color Map Editor</Tab>
            <Tab $w={82} $sep>Find Data</Tab>
            <Tab $active $w={143}>MultiBlock Inspector</Tab>
          </TabGroup>
        </BottomTabs>
      </RightPanel>
    </Page>
  );
}
